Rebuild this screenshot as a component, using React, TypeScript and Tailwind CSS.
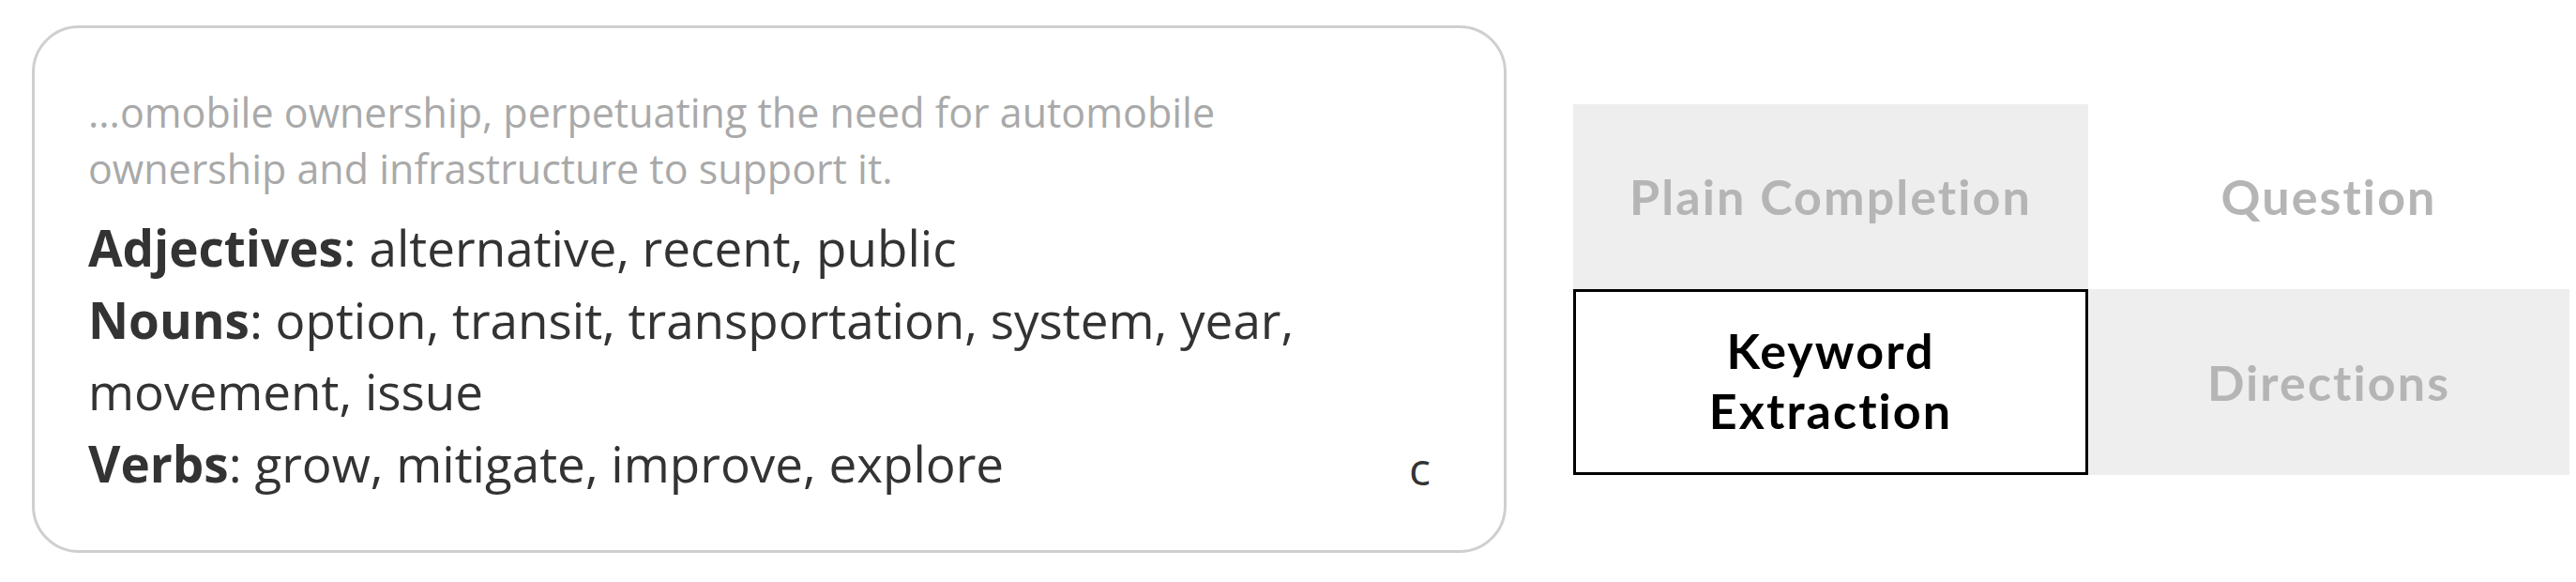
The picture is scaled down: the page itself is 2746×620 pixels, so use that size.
import React from "react";

const btnFont = { fontFamily: "Lato, 'Noto Sans', sans-serif" } as const;

function Btn({
  label,
  variant,
}: {
  label: string;
  variant: "gray" | "white" | "active";
}) {
  const base =
    "flex items-center justify-center text-center text-[52px] leading-[64px] font-bold tracking-[0.04em]";
  const cls =
    variant === "gray"
      ? `${base} bg-[#eeeeee] text-[#b5b5b5]`
      : variant === "white"
      ? `${base} bg-white text-[#b5b5b5]`
      : `${base} bg-white text-black border-[3px] border-black pb-[4px]`;
  return (
    <div className={cls} style={btnFont}>
      <span className={variant === "active" ? "w-min" : ""}>{label}</span>
    </div>
  );
}

export default function App() {
  return (
    <div className="flex items-center bg-white py-[27px] pl-[34px] pr-[7px] gap-[71px]">
      <div
        className="flex w-[1572px] shrink-0 items-end rounded-[50px] border-[3px] border-[#cfcfcf] bg-white pt-[60px] pb-[54px] pl-[57px] pr-[58px]"
        style={{ fontFamily: "'Open Sans', 'Noto Sans', sans-serif" }}
      >
        <div className="w-[1390px] shrink-0">
          <p className="text-[43px] leading-[59.5px] text-[#a9a9a9]">
            ...omobile ownership, perpetuating the need for automobile
            ownership and infrastructure to support it.
          </p>
          <div className="mt-[17px] text-[53px] leading-[76.5px] text-[#333333]">
            <p>
              <span className="font-bold">Adjectives</span>: alternative,
              recent, public
            </p>
            <p>
              <span className="font-bold">Nouns</span>: option, transit,
              transportation, system, year, movement, issue
            </p>
            <p>
              <span className="font-bold">Verbs</span>: grow, mitigate,
              improve, explore
            </p>
          </div>
        </div>
        <span className="ml-auto mr-[20px] mb-[-5px] text-[48px] leading-[76.5px] text-[#333333]">
          c
        </span>
      </div>
      <div className="grid grid-cols-[549px_513px] grid-rows-[197px_198px]">
        <Btn label="Plain Completion" variant="gray" />
        <Btn label="Question" variant="white" />
        <Btn label="Keyword Extraction" variant="active" />
        <Btn label="Directions" variant="gray" />
      </div>
    </div>
  );
}
